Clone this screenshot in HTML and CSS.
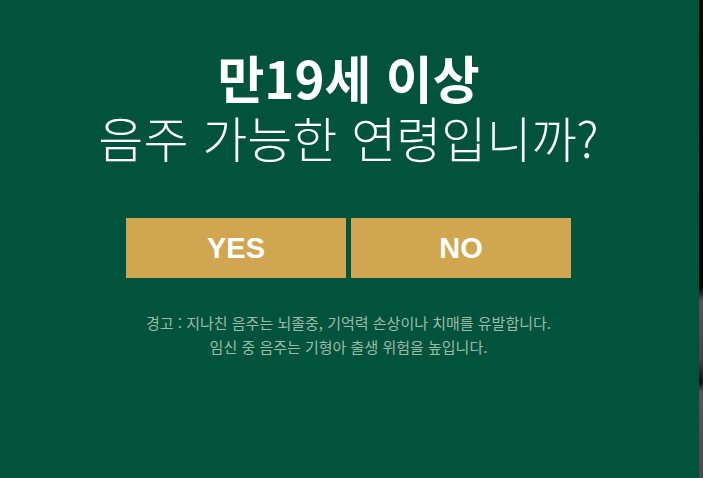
FILE: index.html
```html
<!DOCTYPE html>
<html lang="ko">
<head>
<meta charset="utf-8">
<link rel="stylesheet" href="styles.css">
</head>
<body>
<div class="page">
  <main class="panel">
    <h1 class="title">
      <span class="title-strong">만19세 이상</span>
      <span class="title-light">음주 가능한 연령입니까?</span>
    </h1>
    <div class="actions">
      <button class="btn">YES</button>
      <button class="btn">NO</button>
    </div>
    <p class="warning">경고 : 지나친 음주는 뇌졸중, 기억력 손상이나 치매를 유발합니다.<br>임신 중 음주는 기형아 출생 위험을 높입니다.</p>
  </main>
  <div class="edge"></div>
</div>
</body>
</html>
```
FILE: styles.css
```css
html, body {
  margin: 0;
  padding: 0;
  height: 100%;
}
body {
  font-family: "Noto Sans CJK KR", "Noto Sans", sans-serif;
  background: #000;
  overflow: hidden;
}
.page {
  display: flex;
  height: 478px;
}
.panel {
  width: 699px;
  flex: none;
  background: #01533b;
  display: flex;
  flex-direction: column;
  align-items: center;
  padding: 47px 2px 0 0;
  box-sizing: border-box;
}
.edge {
  flex: 1;
  background: linear-gradient(#0b0805 0%, #000 60%, #555 63%, #444 75%, #111 80%, #555 82%, #4a4a4a 100%);
}
.title {
  margin: 0;
  display: flex;
  flex-direction: column;
  align-items: center;
  color: #fff;
  line-height: 60px;
}
.title-strong {
  font-weight: 700;
  font-size: 51px;
  letter-spacing: 0;
}
.title-light {
  font-weight: 300;
  font-size: 49px;
  letter-spacing: 0;
}
.actions {
  display: flex;
  gap: 5px;
  margin-top: 51px;
}
.btn {
  width: 220px;
  height: 60px;
  border: 0;
  margin: 0;
  padding: 0;
  background: #d1a651;
  color: #fff;
  font-family: "Liberation Sans", Arial, sans-serif;
  font-weight: 700;
  font-size: 29px;
  cursor: pointer;
}
.warning {
  margin: 33px 0 0;
  color: #9fbaaa;
  font-size: 15px;
  line-height: 24px;
  text-align: center;
  letter-spacing: 0;
}
```
